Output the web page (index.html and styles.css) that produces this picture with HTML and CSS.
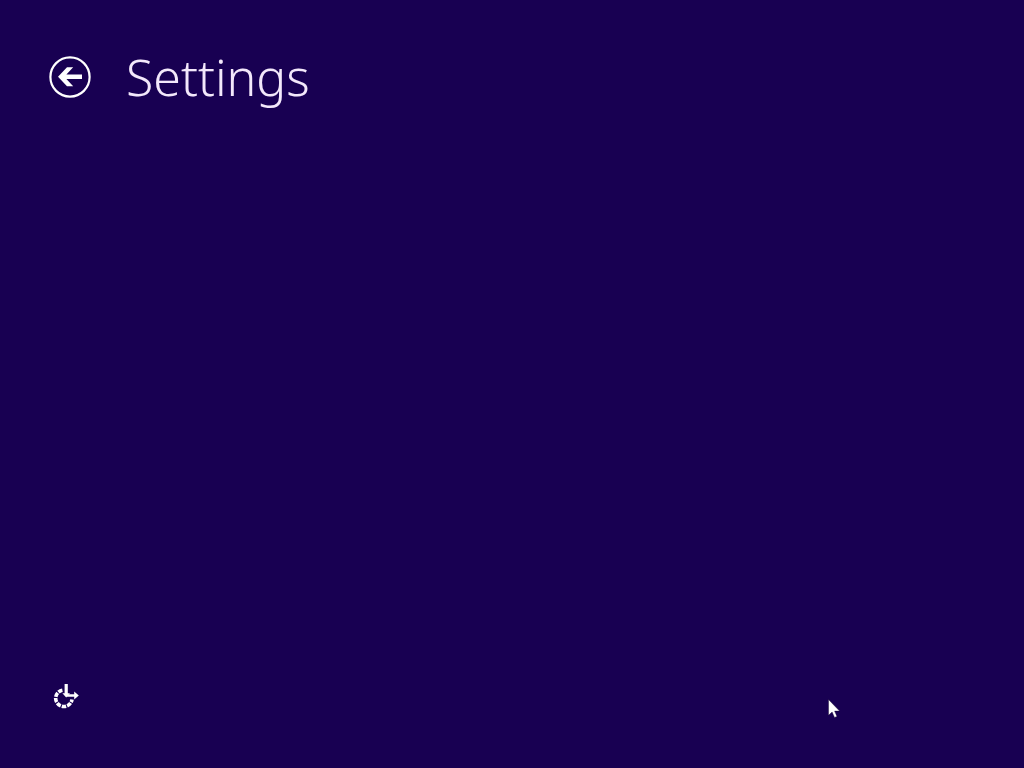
FILE: index.html
```html
<!DOCTYPE html>
<html lang="en">
<head>
    <meta charset="UTF-8">
    <meta name="viewport" content="width=device-width, initial-scale=1.0">
    <title>Settings</title>
    <link rel="stylesheet" href="styles.css">
</head>
<body>
    <header class="page-header">
        <button class="back-button" type="button" aria-label="Back">
            <svg viewBox="0 0 42 42" aria-hidden="true">
                <circle cx="21" cy="21" r="19.6" fill="none" stroke="currentColor" stroke-width="2.2"/>
                <path d="M9 20.8 18 11.3h6.2l-6.8 7.2H33v4.6H17.4l6.8 7.2H18z" fill="currentColor"/>
            </svg>
        </button>
        <h1 class="page-title">Settings</h1>
    </header>

    <main class="page-content"></main>

    <footer class="page-footer">
        <button class="access-button" type="button" aria-label="Ease of access">
            <svg viewBox="0 0 26 26" aria-hidden="true">
                <path d="M9.4 7.2A8.2 8.2 0 1 0 19 16.4" fill="none" stroke="currentColor" stroke-width="3.6" stroke-dasharray="4.4 1.1"/>
                <path d="M11.6 1h3.2v9.2h2.2l-3.8 4.2-3.8-4.2h2.2z" fill="currentColor"/>
                <path d="M14 11.2h7.2V8.6l4.6 3.9-4.6 3.9v-2.6H14z" fill="currentColor"/>
            </svg>
        </button>
    </footer>

    <!-- Mouse pointer -->
    <svg class="pointer" viewBox="0 0 12 19" aria-hidden="true">
        <path d="M.5.5v15.8l3.6-3.3 2.4 5.4 2.5-1-2.4-5.3h5z" fill="#fff" stroke="#10002c" stroke-width=".4"/>
    </svg>
</body>
</html>
```

FILE: styles.css
```css
* {
    box-sizing: border-box;
}

body {
    display: flex;
    flex-direction: column;
    min-height: 100vh;
    margin: 0;
    padding: 41px 49px 59px;
    background: #180052;
    color: #fff;
    font-family: "Noto Sans", "Open Sans", sans-serif;
}

button {
    padding: 0;
    border: 0;
    background: none;
    color: inherit;
    cursor: pointer;
}

button svg {
    display: block;
    width: 100%;
    height: 100%;
}

.page-header {
    display: flex;
    align-items: center;
    gap: 35px;
}

.back-button {
    flex-shrink: 0;
    width: 42px;
    height: 42px;
}

.page-title {
    margin: 0;
    color: #f3e8fb;
    font-size: 50px;
    font-weight: 300;
    line-height: 72px;
}

.page-content {
    flex: 1;
}

.page-footer {
    display: flex;
    padding-left: 4px;
}

.access-button {
    width: 26px;
    height: 26px;
}

.pointer {
    position: absolute;
    top: 699px;
    left: 828px;
    width: 12px;
    height: 19px;
    pointer-events: none;
}
```
